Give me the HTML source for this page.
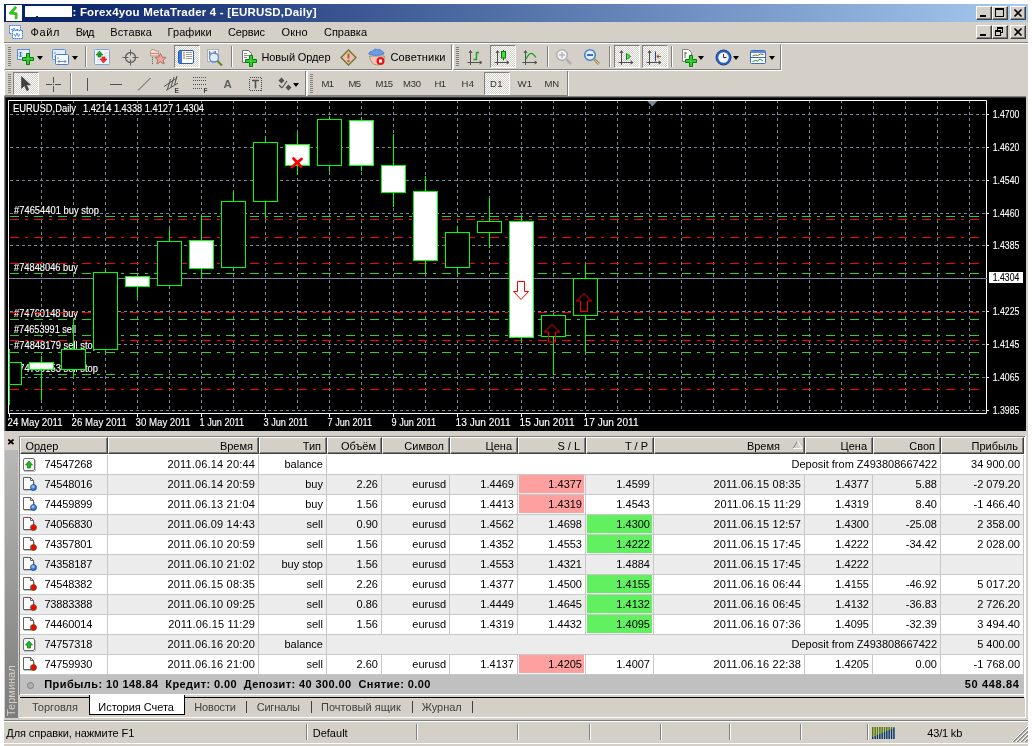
<!DOCTYPE html>
<html lang="ru"><head><meta charset="utf-8"><title>Forex4you MetaTrader 4 - [EURUSD,Daily]</title><style>
html,body{margin:0;padding:0;background:#fff}
body{width:1032px;height:746px;position:relative;overflow:hidden;will-change:transform;font-family:"Liberation Sans", sans-serif;font-size:11px;color:#000;line-height:13px}
div,span{box-sizing:border-box}
.a{position:absolute;white-space:nowrap}
.face{background:#D4D0C8}
.hdr{position:absolute;top:437px;height:17px;background:#D4D0C8;border-top:1px solid #fff;border-left:1px solid #fff;border-right:1px solid #404040;border-bottom:1px solid #404040;box-shadow:inset -1px -1px 0 #808080;text-align:right;padding:2px 5px 0 0;white-space:nowrap;line-height:13px}
.row{position:absolute;left:20px;width:1004px;height:20px;border-bottom:1px solid #C8C8C8}
.c{position:absolute;top:0;height:19px;line-height:19px;text-align:right;padding-right:3px;white-space:nowrap;border-right:1px solid #C8C8C8}
.cb{position:absolute;top:0px;height:18px}
.sep{position:absolute;width:2px;border-left:1px solid #808080;border-right:1px solid #fff}
.grip{position:absolute;width:3px;background:repeating-linear-gradient(to bottom,#808080 0,#808080 1px,transparent 1px,transparent 2px)}
.pressed{position:absolute;border:1px solid;border-color:#808080 #fff #fff #808080;background-color:#eae8e4;background-image:repeating-conic-gradient(#fff 0 25%,#D4D0C8 0 50%);background-size:2px 2px}
.tb{position:absolute;border:1px solid;border-color:#D4D0C8 #808080 #808080 #fff;background:#D4D0C8;box-shadow:1px 1px 0 #fff}
.capbtn{position:absolute;width:16px;height:14px;background:#D4D0C8;border:1px solid;border-color:#fff #404040 #404040 #fff;box-shadow:inset -1px -1px 0 #808080}
.tf{position:absolute;white-space:nowrap;color:#404040;font-size:11px}
.dd{position:absolute;width:0;height:0;border-left:3.5px solid transparent;border-right:3.5px solid transparent;border-top:4px solid #000}
</style></head><body>
<svg class="a" width="0" height="0" style="left:0;top:0"><defs><radialGradient id="gb" cx=".4" cy=".35" r=".7"><stop offset="0" stop-color="#b8d4f8"/><stop offset=".5" stop-color="#4a88e0"/><stop offset="1" stop-color="#1a50b0"/></radialGradient></defs></svg>
<div class="a face" style="left:4px;top:4px;width:1024px;height:742px"></div>
<div class="a" style="left:4px;top:4px;width:1024px;height:18px;background:linear-gradient(to right,#0A246A 0%,#0A246A 5%,#A6CAF0 100%)"></div>
<div class="a" style="left:6px;top:5px;width:16px;height:16px;background:#fff"></div>
<svg class="a" style="left:6px;top:5px" width="16" height="16" viewBox="0 0 16 16"><path d="M10 2 L4.500 8.300 L10.200 8.800 L10 14.300" fill="none" stroke="#7a8a20" stroke-width="2.600" stroke-linejoin="round"/><path d="M10 1.800 L4.300 8 L10.200 8.500 L10 14" fill="none" stroke="#22cc22" stroke-width="2.100" stroke-linejoin="round"/></svg>
<div class="a" style="left:25px;top:6px;width:47px;height:11px;background:#fff"></div>
<div class="a" style="left:36px;top:16px;width:2px;height:1px;background:#0A246A"></div>
<div class="a" style="left:72.5px;top:6px;letter-spacing:0.189px;color:#fff;font-weight:bold;font-size:11.5px">: Forex4you MetaTrader 4 - [EURUSD,Daily]</div>
<div class="capbtn" style="left:976px;top:6px"></div>
<div class="capbtn" style="left:992px;top:6px"></div>
<div class="capbtn" style="left:1010px;top:6px"></div>
<div class="a" style="left:980px;top:15px;width:6px;height:2px;background:#000"></div>
<div class="a" style="left:995px;top:8px;width:9px;height:9px;border:1px solid #000;border-top-width:2px"></div>
<svg class="a" style="left:1010px;top:6px" width="16" height="14" viewBox="0 0 16 14"><path d="M4.5 3.5 L11.5 10.5 M11.5 3.5 L4.5 10.5" stroke="#000" stroke-width="1.6" fill="none"/></svg>
<div class="capbtn" style="left:976px;top:25px"></div>
<div class="capbtn" style="left:992px;top:25px"></div>
<div class="capbtn" style="left:1010px;top:25px"></div>
<div class="a" style="left:980px;top:34px;width:6px;height:2px;background:#000"></div>
<div class="a" style="left:997px;top:27px;width:6px;height:6px;border:1px solid #000;border-top-width:2px"></div>
<div class="a" style="left:995px;top:30px;width:6px;height:6px;border:1px solid #000;border-top-width:2px;background:#D4D0C8"></div>
<svg class="a" style="left:1010px;top:25px" width="16" height="14" viewBox="0 0 16 14"><path d="M4.5 3.5 L11.5 10.5 M11.5 3.5 L4.5 10.5" stroke="#000" stroke-width="1.6" fill="none"/></svg>
<svg class="a" style="left:8px;top:24px" width="16" height="16" viewBox="0 0 16 16"><rect x="1.500" y="1.500" width="11" height="8" fill="#fff" stroke="#4080f0" stroke-dasharray="1.500 .5"/><path d="M3 5.500 h2 l1 -1.500 l1.500 3 l1 -1.500 h2" stroke="#4080f0" fill="none" stroke-width=".9"/><rect x="4.500" y="6.500" width="10" height="8" fill="#fff" stroke="#4080f0" stroke-dasharray="1.500 .5"/><path d="M6 10 l1.500 2.500 l1.500 -3.500 l1.500 3.500 l1.500 -2.500" stroke="#4080f0" fill="none" stroke-width=".9"/></svg>
<div class="a" style="left:30.4px;top:26px;letter-spacing:0.700px;">Файл</div>
<div class="a" style="left:75.8px;top:26px;letter-spacing:-0.700px;">Вид</div>
<div class="a" style="left:110.3px;top:26px;letter-spacing:0.118px;">Вставка</div>
<div class="a" style="left:167.6px;top:26px;letter-spacing:0.044px;">Графики</div>
<div class="a" style="left:228px;top:26px;letter-spacing:-0.134px;">Сервис</div>
<div class="a" style="left:281.4px;top:26px;letter-spacing:0.212px;">Окно</div>
<div class="a" style="left:324px;top:26px;letter-spacing:-0.026px;">Справка</div>
<div class="a" style="left:4px;top:42px;width:1024px;height:1px;background:#808080"></div>
<div class="a" style="left:4px;top:43px;width:1024px;height:1px;background:#fff"></div>
<div class="tb" style="left:4px;top:44px;width:448px;height:26px"></div>
<div class="tb" style="left:453px;top:44px;width:328px;height:26px"></div>
<div class="grip" style="left:8px;top:47px;height:19px"></div>
<div class="grip" style="left:456px;top:47px;height:19px"></div>
<div class="tb" style="left:4px;top:71px;width:302px;height:25px;border-top:none"></div>
<div class="tb" style="left:307px;top:71px;width:261px;height:25px;border-top:none"></div>
<div class="grip" style="left:8px;top:74px;height:19px"></div>
<div class="grip" style="left:310px;top:74px;height:19px"></div>
<div class="sep" style="left:85px;top:46px;height:21px"></div>
<div class="sep" style="left:231px;top:46px;height:21px"></div>
<div class="sep" style="left:547px;top:46px;height:21px"></div>
<div class="sep" style="left:609px;top:46px;height:21px"></div>
<div class="sep" style="left:671px;top:46px;height:21px"></div>
<div class="sep" style="left:70px;top:73px;height:21px"></div>
<div class="pressed" style="left:174px;top:45px;width:26px;height:23px"></div>
<div class="pressed" style="left:490px;top:45px;width:26px;height:23px"></div>
<div class="pressed" style="left:614px;top:45px;width:26px;height:23px"></div>
<div class="pressed" style="left:642px;top:45px;width:26px;height:23px"></div>
<div class="pressed" style="left:13px;top:72px;width:26px;height:23px"></div>
<div class="pressed" style="left:484px;top:72px;width:26px;height:23px"></div>
<div class="dd" style="left:37px;top:56px"></div>
<div class="dd" style="left:72px;top:56px"></div>
<div class="dd" style="left:698px;top:56px"></div>
<div class="dd" style="left:733px;top:56px"></div>
<div class="dd" style="left:769px;top:56px"></div>
<div class="dd" style="left:293px;top:83px"></div>
<svg class="a" style="left:16px;top:48px" width="20" height="18" viewBox="0 0 20 18"><rect x="1.5" y="1.5" width="12" height="10" fill="#e6eefc" stroke="#5b8dd9"/><path d="M4.5 4 v5 M3 5.5 l1.5 -1.500 l1.5 1.5 M3 7.5 l1.5 1.5 l1.5 -1.5" stroke="#3a6fc4" fill="none"/><path d="M6.5 9.5 h4 v-4 h3 v4 h4 v3 h-4 v4 h-3 v-4 h-4 z" fill="#2fd12f" stroke="#0a7a0a" stroke-width="1"/></svg>
<svg class="a" style="left:51px;top:48px" width="20" height="18" viewBox="0 0 20 18"><rect x="1.5" y="1.5" width="13" height="10" rx="1" fill="#e6eefc" stroke="#5b8dd9"/><path d="M4 4 v2 M4 8.500 h8 M4 8.5 l1.5 -1.5 M4 8.5 l1.5 1.5 M12 8.5 l-1.5 -1.5 M12 8.5 l-1.5 1.5" stroke="#6a8fc4" fill="none"/><rect x="4.5" y="6.500" width="13" height="10" rx="1" fill="#f4f8ff" stroke="#4a7dc9"/><path d="M7 13.5 h8 M7 13.5 l1.5 -1.5 M7 13.5 l1.5 1.5 M15 13.5 l-1.5 -1.5 M15 13.500 l-1.5 1.5 M7 9 v2" stroke="#6a8fc4" fill="none"/></svg>
<svg class="a" style="left:94px;top:49px" width="17" height="17" viewBox="0 0 17 17"><rect x="0.5" y="0.5" width="15" height="15" rx="1" fill="#f4f8ff" stroke="#7aa7e0"/><path d="M10 4h4M10 7h4M3 11h3M3 13h3" stroke="#d0d8e8"/><path d="M5.5 2 l-3.500 4 h2 v2 h3 v-2 h2 z" fill="#1ea01e" stroke="#0a700a" stroke-width=".6"/><path d="M9.5 14 l-3.500 -4 h2 v-2 h3 v2 h2 z" fill="#f03030" stroke="#c01010" stroke-width=".6"/></svg>
<svg class="a" style="left:122px;top:49px" width="17" height="17" viewBox="0 0 17 17"><circle cx="8.500" cy="8.5" r="5" fill="none" stroke="#606060" stroke-width="1.3"/><path d="M8.5 0.5 v6 M8.5 10.500 v6 M0.5 8.5 h6 M10.5 8.500 h6" stroke="#606060"/></svg>
<svg class="a" style="left:148px;top:48px" width="20" height="19" viewBox="0 0 20 19"><path d="M2.5 3.5 l1 -2 h3 l1 1.5 h3 v5 h-8z" fill="#f8d8d8" stroke="#b0a080"/><path d="M3 5.5 h7" stroke="#e08080"/><path d="M4.500 9 v8" stroke="#606060" stroke-dasharray="1 1" fill="none"/><path d="M12.5 5.5 l1.700 3.600 l3.900 .4 l-2.900 2.600 l.9 3.900 l-3.600 -2.100 l-3.600 2.100 l.9 -3.900 l-2.900 -2.600 l3.900 -.4z" fill="#f7a0a8" stroke="#a07050" stroke-width=".9"/></svg>
<svg class="a" style="left:178px;top:50px" width="17" height="15" viewBox="0 0 17 15"><rect x="0.500" y="0.5" width="15" height="13" rx="1.500" fill="#fff" stroke="#2a5db0"/><rect x="1" y="1" width="3" height="12" fill="#3a78d8"/><path d="M5.5 2.500h1M5.5 5.500h1M5.500 8.500h1" stroke="#d02020"/><path d="M5.500 4h1M5.500 7h1" stroke="#202020"/><path d="M8 2.500h6M8 4.500h6M8 6.500h6M8 8.500h6" stroke="#a0a0a0"/></svg>
<svg class="a" style="left:206px;top:49px" width="19" height="19" viewBox="0 0 19 19"><rect x="1.5" y="0.500" width="11" height="12" fill="#f4f4f4" stroke="#b0b0b0"/><path d="M3.500 2 v4 M3.500 4 h2 M9.500 2 v4 M7.500 3 h2" stroke="#6080a0"/><circle cx="8" cy="8.500" r="4.500" fill="#dce8f8" fill-opacity=".75" stroke="#5a8ad0" stroke-width="1.300"/><path d="M11.500 12 l4.500 4.500" stroke="#708030" stroke-width="2.200"/></svg>
<svg class="a" style="left:241px;top:49px" width="18" height="19" viewBox="0 0 18 19"><path d="M1.500 1.500 h6 l3 3 v9 h-9z" fill="#fff" stroke="#707070"/><path d="M3 4.500h3M3 6.500h5M3 8.500h3" stroke="#909090"/><path d="M4.5 10.5 h4 v-4 h3 v4 h4 v3 h-4 v4 h-3 v-4 h-4 z" fill="#2fd12f" stroke="#0a7a0a" stroke-width="1"/></svg>
<div class="a" style="left:261.5px;top:51px;letter-spacing:-0.109px;">Новый Ордер</div>
<svg class="a" style="left:340px;top:48.5px" width="18" height="18" viewBox="0 0 18 18"><path d="M8.500 1 L16 8.500 L8.500 16 L1 8.500z" fill="#f8b8b8" stroke="#6b7a2a" stroke-width="1.400"/><path d="M8.500 4.500 v5" stroke="#808020" stroke-width="2"/><circle cx="8.500" cy="12" r="1.200" fill="#808020"/></svg>
<svg class="a" style="left:367px;top:48px" width="20" height="20" viewBox="0 0 20 20"><path d="M2.500 8 q1 9 8 9 q6 0 7 -9z" fill="#f8c0c0" stroke="#80a040" stroke-width=".8"/><path d="M1.500 6 q1 -3 4 -3 q2 -3 5 -1.500 q3 -1 4 1.500 q3 1 2.500 3 q-8 3 -15.500 0z" fill="#6a9ae8" stroke="#4a7ac8" stroke-width=".8"/><circle cx="13.500" cy="13" r="4" fill="#e81818"/><rect x="12" y="11.500" width="3" height="3" fill="#fff"/></svg>
<div class="a" style="left:390.5px;top:51px;letter-spacing:0.156px;">Советники</div>
<svg class="a" style="left:467px;top:50px" width="17" height="17" viewBox="0 0 17 17"><path d="M3.500 1 v14 M0.500 12.500 h14 M3.500 0.500 l-1.500 2.500 M3.500 0.500 l1.500 2.500 M15 12.500 l-2.500 -1.500 M15 12.500 l-2.500 1.500" stroke="#505050" fill="none"/><path d="M9.500 2 v8 M9.500 2.500 h2.500 M6.500 9.500 h3" stroke="#1ea01e" stroke-width="1.400" fill="none"/></svg>
<svg class="a" style="left:494px;top:50px" width="17" height="17" viewBox="0 0 17 17"><path d="M3.500 1 v14 M0.500 12.500 h14 M3.500 0.500 l-1.500 2.500 M3.500 0.500 l1.500 2.500 M15 12.500 l-2.500 -1.500 M15 12.500 l-2.500 1.500" stroke="#505050" fill="none"/><path d="M9.500 -0.500 v11" stroke="#0a7a0a"/><rect x="7.500" y="1.500" width="4" height="6.500" fill="#40e040" stroke="#0a7a0a"/></svg>
<svg class="a" style="left:522px;top:50px" width="17" height="17" viewBox="0 0 17 17"><path d="M3.500 1 v14 M0.500 12.500 h14 M3.500 0.500 l-1.500 2.500 M3.500 0.500 l1.500 2.500 M15 12.500 l-2.500 -1.500 M15 12.500 l-2.500 1.500" stroke="#505050" fill="none"/><path d="M4 9 q3 -6 6 -5.500 q2 1 4 4" stroke="#1ea01e" stroke-width="1.300" fill="none"/></svg>
<svg class="a" style="left:555px;top:48px" width="19" height="19" viewBox="0 0 19 19"><circle cx="7" cy="7" r="5.300" fill="#f4f4f4" stroke="#b0b0b0" stroke-width="1.600"/><path d="M4 7h6M7 4v6" stroke="#b8b8b8" stroke-width="1.600"/><path d="M11.500 11.500 l4.500 4.500" stroke="#b0b0b0" stroke-width="2.600"/></svg>
<svg class="a" style="left:583px;top:48px" width="19" height="19" viewBox="0 0 19 19"><circle cx="7" cy="7" r="5.300" fill="#e4eefc" stroke="#4a80d0" stroke-width="1.600"/><path d="M4 7h6" stroke="#2a5db0" stroke-width="1.800"/><path d="M11.500 11.500 l4.500 4.500" stroke="#909040" stroke-width="2.600"/><path d="M12 12 l4 4" stroke="#f8c0c0" stroke-width="1"/></svg>
<svg class="a" style="left:618px;top:50px" width="17" height="17" viewBox="0 0 17 17"><path d="M3.500 1 v14 M0.500 12.500 h14 M3.500 0.500 l-1.500 2.500 M3.500 0.500 l1.500 2.500 M15 12.500 l-2.500 -1.500 M15 12.500 l-2.500 1.500" stroke="#505050" fill="none"/><path d="M8.500 3.500 l4 3 l-4 3z" fill="#60e060" stroke="#0a8a0a" stroke-width="1"/></svg>
<svg class="a" style="left:646px;top:50px" width="17" height="17" viewBox="0 0 17 17"><path d="M3.500 1 v14 M0.500 12.500 h14 M3.500 0.500 l-1.500 2.500 M3.500 0.500 l1.500 2.500 M15 12.500 l-2.500 -1.500 M15 12.500 l-2.500 1.500" stroke="#505050" fill="none"/><path d="M9.500 1.500 v10" stroke="#2040c0"/><path d="M15 6.500 h-4 M13 4.500 l-2 2 l2 2" stroke="#808020" fill="none" stroke-width="1"/><circle cx="12" cy="6.500" r="1" fill="#e02020"/></svg>
<svg class="a" style="left:680px;top:48px" width="19" height="19" viewBox="0 0 19 19"><path d="M2.500 1.500 h6 l3 3 v9 h-9z" fill="#fff" stroke="#808080"/><path d="M5 4 v6 M5 5h2" stroke="#606060" fill="none"/><path d="M5.5 11.5 h4 v-4 h3 v4 h4 v3 h-4 v4 h-3 v-4 h-4 z" fill="#2fd12f" stroke="#0a7a0a" stroke-width="1"/></svg>
<svg class="a" style="left:714.5px;top:48.5px" width="18" height="18" viewBox="0 0 18 18"><circle cx="8.500" cy="8.500" r="7.500" fill="#2a60c8" stroke="#1a3a90"/><circle cx="8.500" cy="8.500" r="5.200" fill="#f4f8ff"/><path d="M8.500 5 v3.500 h3" stroke="#303030" fill="none"/></svg>
<svg class="a" style="left:750px;top:50px" width="17" height="15" viewBox="0 0 17 15"><rect x="0.500" y="0.500" width="15" height="13" rx="1" fill="#fff" stroke="#3a6fc4"/><rect x="1" y="1" width="14" height="2" fill="#5a8ad8"/><path d="M1 7.500 h14" stroke="#3a6fc4"/><path d="M2.500 6 l3 -1 l2 .5 l3 -1.500 l3 .5" stroke="#707010" fill="none"/><path d="M2.500 11.500 l3 -1 l2 .5 l2.500 -2 l3 2" stroke="#1e901e" fill="none"/></svg>
<svg class="a" style="left:20px;top:76px" width="12" height="16" viewBox="0 0 12 16"><path d="M1.500 0.500 v12 l3 -2.800 l2.300 5 l2 -1 l-2.300 -4.800 h4z" fill="#404040" stroke="#404040" stroke-width=".6"/></svg>
<svg class="a" style="left:46px;top:77px" width="16" height="16" viewBox="0 0 16 16"><path d="M7.500 0 v6 M7.500 9 v6 M0 7.500 h6 M9 7.500 h6 M7 7.500 h1" stroke="#505050" fill="none"/></svg>
<div class="a" style="left:87px;top:78px;width:1px;height:13px;background:#505050"></div>
<div class="a" style="left:110px;top:84px;width:12px;height:1px;background:#505050"></div>
<svg class="a" style="left:137px;top:77px" width="15" height="15" viewBox="0 0 15 15"><path d="M1 13.500 L13.500 1" stroke="#505050" fill="none"/></svg>
<svg class="a" style="left:163px;top:75px" width="20" height="20" viewBox="0 0 20 20"><path d="M1 11.500 L14 3 M3 15.500 L15 8 M4.500 14 l3 -10 M8 12 l3 -10 M11.500 10 l2.500 -9" stroke="#505050" fill="none"/><text x="11.500" y="17.600" font-size="6.500" font-weight="bold" fill="#404040" font-family="Liberation Sans, sans-serif">E</text></svg>
<svg class="a" style="left:192px;top:76px" width="20" height="20" viewBox="0 0 20 20"><path d="M1 1.500 h13 M1 4.500 h13 M1 8.500 h13 M1 12.500 h10" stroke="#505050" stroke-dasharray="1 1" fill="none"/><text x="11.500" y="16.600" font-size="6.500" font-weight="bold" fill="#404040" font-family="Liberation Sans, sans-serif">F</text></svg>
<div class="a" style="left:223.5px;top:78px;font-size:11.500px;font-weight:bold;color:#606060">A</div>
<svg class="a" style="left:249px;top:77px" width="14" height="15" viewBox="0 0 14 15"><rect x="0.500" y="0.500" width="12" height="13" fill="none" stroke="#404040" stroke-dasharray="1 1" shape-rendering="crispEdges"/><path d="M3 3.500 h7 M6.500 3.500 v8" stroke="#505050" stroke-width="1.600" fill="none"/></svg>
<svg class="a" style="left:277px;top:77px" width="16" height="15" viewBox="0 0 16 15"><path d="M4.500 0.500 l3 3 l-3 3 l-3 -3z M11.500 7.500 l3 3 l-3 3 l-3 -3z" fill="#505050"/><path d="M2 8 l3 3 M5 11 l5 -7" stroke="#505050" fill="none" stroke-width="1.200"/></svg>
<div class="a" style="left:321.5px;top:77.2px;letter-spacing:-0.700px;color:#303030;font-size:9.500px">M1</div>
<div class="a" style="left:348.5px;top:77.2px;letter-spacing:-0.700px;color:#303030;font-size:9.500px">M5</div>
<div class="a" style="left:375.5px;top:77.2px;letter-spacing:-0.492px;color:#303030;font-size:9.500px">M15</div>
<div class="a" style="left:403px;top:77.2px;letter-spacing:-0.242px;color:#303030;font-size:9.500px">M30</div>
<div class="a" style="left:434.5px;top:77.2px;letter-spacing:-0.656px;color:#303030;font-size:9.500px">H1</div>
<div class="a" style="left:461.5px;top:77.2px;letter-spacing:0.344px;color:#303030;font-size:9.500px">H4</div>
<div class="a" style="left:490px;top:77.2px;letter-spacing:0.344px;color:#303030;font-size:9.500px">D1</div>
<div class="a" style="left:517.5px;top:77.2px;letter-spacing:0.250px;color:#303030;font-size:9.500px">W1</div>
<div class="a" style="left:544.5px;top:77.2px;letter-spacing:-0.281px;color:#303030;font-size:9.500px">MN</div>
<svg class="a" style="left:0;top:0" width="1032" height="746" viewBox="0 0 1032 746"><rect x="4" y="97" width="1022" height="334" fill="#000"/><rect x="4" y="96" width="1022" height="1" fill="#808080"/><rect x="4" y="97" width="1022" height="1" fill="#303030"/><rect x="4" y="97" width="1" height="334" fill="#808080"/><rect x="5" y="98" width="1" height="333" fill="#303030"/><g stroke="#778899" stroke-width="1" stroke-dasharray="3 3" fill="none"><path d="M10 114.5 H986"/><path d="M10 147.5 H986"/><path d="M10 180.5 H986"/><path d="M10 213.5 H986"/><path d="M10 245.5 H986"/><path d="M10 311.5 H986"/><path d="M10 344.5 H986"/><path d="M10 377.5 H986"/><path d="M10 410.5 H986"/><path d="M41.5 100 V412"/><path d="M73.5 100 V412"/><path d="M105.5 100 V412"/><path d="M137.5 100 V412"/><path d="M169.5 100 V412"/><path d="M201.5 100 V412"/><path d="M233.5 100 V412"/><path d="M265.5 100 V412"/><path d="M297.5 100 V412"/><path d="M329.5 100 V412"/><path d="M361.5 100 V412"/><path d="M393.5 100 V412"/><path d="M425.5 100 V412"/><path d="M457.5 100 V412"/><path d="M489.5 100 V412"/><path d="M521.5 100 V412"/><path d="M553.5 100 V412"/><path d="M585.5 100 V412"/><path d="M617.5 100 V412"/><path d="M649.5 100 V412"/><path d="M681.5 100 V412"/><path d="M713.5 100 V412"/><path d="M745.5 100 V412"/><path d="M777.5 100 V412"/><path d="M809.5 100 V412"/><path d="M841.5 100 V412"/><path d="M873.5 100 V412"/><path d="M905.5 100 V412"/><path d="M937.5 100 V412"/><path d="M969.5 100 V412"/></g><path d="M8.5 413.5 V100.5 H986.5 V413.5 M8.5 413.5 H986.5" stroke="#fff" fill="none"/><path d="M987 114.5 h2" stroke="#fff"/><path d="M987 147.5 h2" stroke="#fff"/><path d="M987 180.5 h2" stroke="#fff"/><path d="M987 213.5 h2" stroke="#fff"/><path d="M987 245.5 h2" stroke="#fff"/><path d="M987 311.5 h2" stroke="#fff"/><path d="M987 344.5 h2" stroke="#fff"/><path d="M987 377.5 h2" stroke="#fff"/><path d="M987 410.5 h2" stroke="#fff"/><path d="M9.5 414 v3" stroke="#fff"/><path d="M73.5 414 v3" stroke="#fff"/><path d="M137.5 414 v3" stroke="#fff"/><path d="M201.5 414 v3" stroke="#fff"/><path d="M265.5 414 v3" stroke="#fff"/><path d="M329.5 414 v3" stroke="#fff"/><path d="M393.5 414 v3" stroke="#fff"/><path d="M457.5 414 v3" stroke="#fff"/><path d="M521.5 414 v3" stroke="#fff"/><path d="M585.5 414 v3" stroke="#fff"/><path d="M647.300 101 h10 l-5 5.500z" fill="#778899"/><rect x="12" y="103" width="65" height="11" fill="#000"/><text x="13" y="111.5" fill="#fff" stroke="#fff" text-anchor="start" font-family="Liberation Sans, sans-serif" font-size="10" stroke-width="0.12" textLength="63" lengthAdjust="spacingAndGlyphs">EURUSD,Daily</text><rect x="82" y="103" width="123" height="11" fill="#000"/><text x="83" y="111.5" fill="#fff" stroke="#fff" text-anchor="start" font-family="Liberation Sans, sans-serif" font-size="10" stroke-width="0.12" textLength="121" lengthAdjust="spacingAndGlyphs">1.4214 1.4338 1.4127 1.4304</text><rect x="13" y="206" width="87" height="11" fill="#000"/><text x="14" y="214" fill="#fff" stroke="#fff" text-anchor="start" font-family="Liberation Sans, sans-serif" font-size="10" stroke-width="0.12" textLength="85" lengthAdjust="spacingAndGlyphs">#74654401 buy stop</text><rect x="13" y="263" width="66" height="11" fill="#000"/><text x="14" y="271" fill="#fff" stroke="#fff" text-anchor="start" font-family="Liberation Sans, sans-serif" font-size="10" stroke-width="0.12" textLength="64" lengthAdjust="spacingAndGlyphs">#74848046 buy</text><rect x="13" y="309" width="66" height="11" fill="#000"/><text x="14" y="317" fill="#fff" stroke="#fff" text-anchor="start" font-family="Liberation Sans, sans-serif" font-size="10" stroke-width="0.12" textLength="64" lengthAdjust="spacingAndGlyphs">#74760148 buy</text><rect x="13" y="325" width="64" height="11" fill="#000"/><text x="14" y="333" fill="#fff" stroke="#fff" text-anchor="start" font-family="Liberation Sans, sans-serif" font-size="10" stroke-width="0.12" textLength="62" lengthAdjust="spacingAndGlyphs">#74653991 sell</text><rect x="13" y="341" width="86" height="11" fill="#000"/><text x="14" y="349" fill="#fff" stroke="#fff" text-anchor="start" font-family="Liberation Sans, sans-serif" font-size="10" stroke-width="0.12" textLength="84" lengthAdjust="spacingAndGlyphs">#74848179 sell stop</text><rect x="13" y="363" width="86" height="11" fill="#000"/><text x="14" y="371.5" fill="#fff" stroke="#fff" text-anchor="start" font-family="Liberation Sans, sans-serif" font-size="10" stroke-width="0.12" textLength="84" lengthAdjust="spacingAndGlyphs">#74769153 sell stop</text><g stroke-width="1" stroke-dasharray="9 6 3 6" fill="none"><path d="M10 216.5 H979" stroke="#32CD32"/><path d="M10 219.5 H979" stroke="#FF0000"/><path d="M10 237.5 H979" stroke="#FF0000"/><path d="M10 263.5 H979" stroke="#FF0000"/><path d="M10 273.5 H979" stroke="#32CD32"/><path d="M10 312.5 H979" stroke="#FF0000"/><path d="M10 319.5 H979" stroke="#32CD32"/><path d="M10 335.5 H979" stroke="#32CD32"/><path d="M10 340.5 H979" stroke="#FF0000"/><path d="M10 352.5 H979" stroke="#32CD32"/><path d="M10 374.5 H979" stroke="#32CD32"/><path d="M10 389.5 H979" stroke="#FF0000"/></g><path d="M9 278.5 H987" stroke="#778899"/><g shape-rendering="crispEdges"><path d="M9.5 349 V405" stroke="#00FF00"/><rect x="9.5" y="362.5" width="12" height="22" fill="#000" stroke="#00FF00"/><path d="M41.5 356 V400" stroke="#00FF00"/><rect x="29.5" y="362.5" width="24" height="7" fill="#fff" stroke="#00FF00"/><path d="M73.5 319 V377" stroke="#00FF00"/><rect x="61.5" y="349.5" width="24" height="20" fill="#000" stroke="#00FF00"/><path d="M105.5 269 V353" stroke="#00FF00"/><rect x="93.5" y="272.5" width="24" height="77" fill="#000" stroke="#00FF00"/><path d="M137.5 276 V299" stroke="#00FF00"/><rect x="125.5" y="276.5" width="24" height="10" fill="#fff" stroke="#00FF00"/><path d="M169.5 229 V287" stroke="#00FF00"/><rect x="157.5" y="241.5" width="24" height="44" fill="#000" stroke="#00FF00"/><path d="M201.5 215 V278" stroke="#00FF00"/><rect x="189.5" y="240.5" width="24" height="28" fill="#fff" stroke="#00FF00"/><path d="M233.5 191 V271" stroke="#00FF00"/><rect x="221.5" y="201.5" width="24" height="66" fill="#000" stroke="#00FF00"/><path d="M265.5 137 V219" stroke="#00FF00"/><rect x="253.5" y="142.5" width="24" height="59" fill="#000" stroke="#00FF00"/><path d="M297.5 132 V175" stroke="#00FF00"/><rect x="285.5" y="144.5" width="24" height="21" fill="#fff" stroke="#00FF00"/><path d="M329.5 116 V172" stroke="#00FF00"/><rect x="317.5" y="119.5" width="24" height="46" fill="#000" stroke="#00FF00"/><path d="M361.5 117 V171" stroke="#00FF00"/><rect x="349.5" y="120.5" width="24" height="45" fill="#fff" stroke="#00FF00"/><path d="M393.5 134 V207" stroke="#00FF00"/><rect x="381.5" y="165.5" width="24" height="27" fill="#fff" stroke="#00FF00"/><path d="M425.5 176 V273" stroke="#00FF00"/><rect x="413.5" y="191.5" width="24" height="69" fill="#fff" stroke="#00FF00"/><path d="M457.5 226 V274" stroke="#00FF00"/><rect x="445.5" y="232.5" width="24" height="35" fill="#000" stroke="#00FF00"/><path d="M489.5 198 V248" stroke="#00FF00"/><rect x="477.5" y="221.5" width="24" height="11" fill="#000" stroke="#00FF00"/><path d="M521.5 216 V342" stroke="#00FF00"/><rect x="509.5" y="221.5" width="24" height="116" fill="#fff" stroke="#00FF00"/><path d="M553.5 313 V375" stroke="#00FF00"/><rect x="541.5" y="315.5" width="24" height="21" fill="#000" stroke="#00FF00"/><path d="M585.5 264 V353" stroke="#00FF00"/><rect x="573.5" y="278.5" width="24" height="37" fill="#000" stroke="#00FF00"/></g><path d="M8.5 413.5 V100.5" stroke="#fff" fill="none"/><path d="M293.5 158.5 L301 166.5 M301.5 159 L292 167" stroke="#FF0000" stroke-width="2.8" fill="none" stroke-linecap="round"/><path d="M517.5 281.5 h7 v10 h4 l-7.5 8 l-7.5 -8 h4z" fill="none" stroke="#FF0000"/><path d="M552 324.5 l7.5 7.5 h-4 v10 h-7 v-10 h-4z" fill="none" stroke="#FF0000"/><path d="M584 293.5 l7.5 7.5 h-4 v10.5 h-7 v-10.5 h-4z" fill="none" stroke="#FF0000"/><text x="992.8" y="117.5" fill="#fff" stroke="#fff" text-anchor="start" font-family="Liberation Sans, sans-serif" font-size="10" stroke-width="0.12" textLength="26.5" lengthAdjust="spacingAndGlyphs">1.4700</text><text x="992.8" y="150.5" fill="#fff" stroke="#fff" text-anchor="start" font-family="Liberation Sans, sans-serif" font-size="10" stroke-width="0.12" textLength="26.5" lengthAdjust="spacingAndGlyphs">1.4620</text><text x="992.8" y="183.5" fill="#fff" stroke="#fff" text-anchor="start" font-family="Liberation Sans, sans-serif" font-size="10" stroke-width="0.12" textLength="26.5" lengthAdjust="spacingAndGlyphs">1.4540</text><text x="992.8" y="216.5" fill="#fff" stroke="#fff" text-anchor="start" font-family="Liberation Sans, sans-serif" font-size="10" stroke-width="0.12" textLength="26.5" lengthAdjust="spacingAndGlyphs">1.4460</text><text x="992.8" y="248.5" fill="#fff" stroke="#fff" text-anchor="start" font-family="Liberation Sans, sans-serif" font-size="10" stroke-width="0.12" textLength="26.5" lengthAdjust="spacingAndGlyphs">1.4385</text><text x="992.8" y="314.5" fill="#fff" stroke="#fff" text-anchor="start" font-family="Liberation Sans, sans-serif" font-size="10" stroke-width="0.12" textLength="26.5" lengthAdjust="spacingAndGlyphs">1.4225</text><text x="992.8" y="347.5" fill="#fff" stroke="#fff" text-anchor="start" font-family="Liberation Sans, sans-serif" font-size="10" stroke-width="0.12" textLength="26.5" lengthAdjust="spacingAndGlyphs">1.4145</text><text x="992.8" y="380.5" fill="#fff" stroke="#fff" text-anchor="start" font-family="Liberation Sans, sans-serif" font-size="10" stroke-width="0.12" textLength="26.5" lengthAdjust="spacingAndGlyphs">1.4065</text><text x="992.8" y="413.5" fill="#fff" stroke="#fff" text-anchor="start" font-family="Liberation Sans, sans-serif" font-size="10" stroke-width="0.12" textLength="26.5" lengthAdjust="spacingAndGlyphs">1.3985</text><rect x="989" y="272" width="34" height="11" fill="#fff"/><text x="992.8" y="281" fill="#000" stroke="#000" text-anchor="start" font-family="Liberation Sans, sans-serif" font-size="10" stroke-width="0.12" textLength="26.5" lengthAdjust="spacingAndGlyphs">1.4304</text><text x="7.6" y="426" fill="#fff" stroke="#fff" text-anchor="start" font-family="Liberation Sans, sans-serif" font-size="10" stroke-width="0.12" textLength="55" lengthAdjust="spacingAndGlyphs">24 May 2011</text><text x="71.6" y="426" fill="#fff" stroke="#fff" text-anchor="start" font-family="Liberation Sans, sans-serif" font-size="10" stroke-width="0.12" textLength="55" lengthAdjust="spacingAndGlyphs">26 May 2011</text><text x="135.6" y="426" fill="#fff" stroke="#fff" text-anchor="start" font-family="Liberation Sans, sans-serif" font-size="10" stroke-width="0.12" textLength="55" lengthAdjust="spacingAndGlyphs">30 May 2011</text><text x="199.6" y="426" fill="#fff" stroke="#fff" text-anchor="start" font-family="Liberation Sans, sans-serif" font-size="10" stroke-width="0.12" textLength="44.5" lengthAdjust="spacingAndGlyphs">1 Jun 2011</text><text x="263.6" y="426" fill="#fff" stroke="#fff" text-anchor="start" font-family="Liberation Sans, sans-serif" font-size="10" stroke-width="0.12" textLength="44.5" lengthAdjust="spacingAndGlyphs">3 Jun 2011</text><text x="327.6" y="426" fill="#fff" stroke="#fff" text-anchor="start" font-family="Liberation Sans, sans-serif" font-size="10" stroke-width="0.12" textLength="44.5" lengthAdjust="spacingAndGlyphs">7 Jun 2011</text><text x="391.6" y="426" fill="#fff" stroke="#fff" text-anchor="start" font-family="Liberation Sans, sans-serif" font-size="10" stroke-width="0.12" textLength="44.5" lengthAdjust="spacingAndGlyphs">9 Jun 2011</text><text x="455.6" y="426" fill="#fff" stroke="#fff" text-anchor="start" font-family="Liberation Sans, sans-serif" font-size="10" stroke-width="0.12" textLength="55" lengthAdjust="spacingAndGlyphs">13 Jun 2011</text><text x="519.6" y="426" fill="#fff" stroke="#fff" text-anchor="start" font-family="Liberation Sans, sans-serif" font-size="10" stroke-width="0.12" textLength="55" lengthAdjust="spacingAndGlyphs">15 Jun 2011</text><text x="583.6" y="426" fill="#fff" stroke="#fff" text-anchor="start" font-family="Liberation Sans, sans-serif" font-size="10" stroke-width="0.12" textLength="55" lengthAdjust="spacingAndGlyphs">17 Jun 2011</text></svg>
<div class="a" style="left:5px;top:450px;width:13px;height:268px;background:linear-gradient(to bottom,#B8B8B8,#7C7C7C)"></div>
<svg class="a" style="left:7px;top:438px" width="8" height="8" viewBox="0 0 8 8"><path d="M1.300 1.500 L6.500 6.200 M6.500 1.500 L1.300 6.200" stroke="#000" stroke-width="1.700"/></svg>
<div class="a" style="left:5px;top:716px;width:13px;height:50px;transform-origin:0 0;transform:rotate(-90deg) ;color:#D4D0C8;font-size:11px;line-height:13px;width:60px;height:13px">Терминал</div>
<div class="a" style="left:19px;top:436px;width:1007px;height:262px;background:#fff;border-left:1px solid #808080;border-top:1px solid #808080"></div>
<div class="hdr" style="left:20px;width:88px;text-align:left;padding-left:4.4px;">Ордер</div>
<div class="hdr" style="left:108px;width:151px;">Время</div>
<div class="hdr" style="left:259px;width:68px;">Тип</div>
<div class="hdr" style="left:327px;width:55px;">Объём</div>
<div class="hdr" style="left:382px;width:68px;">Символ</div>
<div class="hdr" style="left:450px;width:68px;">Цена</div>
<div class="hdr" style="left:518px;width:68px;">S / L</div>
<div class="hdr" style="left:586px;width:68px;">T / P</div>
<div class="hdr" style="left:654px;width:151px;padding-right:24px;">Время</div>
<div class="hdr" style="left:805px;width:68px;">Цена</div>
<div class="hdr" style="left:873px;width:68px;">Своп</div>
<div class="hdr" style="left:941px;width:83px;">Прибыль</div>
<svg class="a" style="left:792px;top:440px" width="12" height="10" viewBox="0 0 12 10"><path d="M1 8.5 L5.5 1 " stroke="#808080" fill="none"/><path d="M5.5 1 L10 8.5 H1" stroke="#fff" fill="none"/></svg>
<div class="row" style="top:455px;background:#fff">
<svg class="a" style="left:3px;top:3px" width="13" height="14" viewBox="0 0 13 14"><rect x="0.5" y="0.5" width="11" height="12" rx="1.5" fill="#fafafa" stroke="#707070"/><path d="M1 13.5 h11 M12.5 2 v11" stroke="#c0c0c0" fill="none"/><path d="M6 3 l-3.500 4 h2 v3 h3 v-3 h2z" fill="#1fb81f" stroke="#0a7a0a" stroke-width=".7"/></svg>
<div class="c" style="left:0;width:88px;text-align:left;padding-left:24.4px;letter-spacing:-0.15px">74547268</div>
<div class="c" style="left:88px;width:151px;letter-spacing:0.17px;">2011.06.14 20:44</div>
<div class="c" style="left:239px;width:68px;">balance</div>
<div class="c" style="left:307px;width:614px;">Deposit from Z493808667422</div>
<div class="c" style="left:921px;width:83px;">34 900.00</div>
</div>
<div class="row" style="top:475px;background:#ECECEC">
<svg class="a" style="left:3px;top:2px" width="15" height="15" viewBox="0 0 15 15"><path d="M0.5 0.5 h7 l3 3 v9 h-10z" fill="#fff" stroke="#606060"/><path d="M7.5 0.5 v3 h3" fill="none" stroke="#606060"/><path d="M1 13.5 h10 M11.500 5 v8" stroke="#c0c0c0" fill="none"/><circle cx="10.500" cy="10.500" r="3" fill="url(#gb)" stroke="#1a4aa0" stroke-width=".8"/></svg>
<div class="c" style="left:0;width:88px;text-align:left;padding-left:24.4px;letter-spacing:-0.15px">74548016</div>
<div class="c" style="left:88px;width:151px;letter-spacing:0.17px;">2011.06.14 20:59</div>
<div class="c" style="left:239px;width:68px;">buy</div>
<div class="c" style="left:307px;width:55px;">2.26</div>
<div class="c" style="left:362px;width:68px;">eurusd</div>
<div class="c" style="left:430px;width:68px;">1.4469</div>
<div class="c" style="left:498px;width:68px;background:#FFA0A0;box-shadow:inset 0 -1px 0 #ECECEC, inset -1px 0 0 #ECECEC, inset 1px 0 0 #ECECEC;">1.4377</div>
<div class="c" style="left:566px;width:68px;">1.4599</div>
<div class="c" style="left:634px;width:151px;letter-spacing:0.17px;">2011.06.15 08:35</div>
<div class="c" style="left:785px;width:68px;">1.4377</div>
<div class="c" style="left:853px;width:68px;">5.88</div>
<div class="c" style="left:921px;width:83px;">-2 079.20</div>
</div>
<div class="row" style="top:495px;background:#fff">
<svg class="a" style="left:3px;top:2px" width="15" height="15" viewBox="0 0 15 15"><path d="M0.5 0.5 h7 l3 3 v9 h-10z" fill="#fff" stroke="#606060"/><path d="M7.5 0.5 v3 h3" fill="none" stroke="#606060"/><path d="M1 13.5 h10 M11.500 5 v8" stroke="#c0c0c0" fill="none"/><circle cx="10.500" cy="10.500" r="3" fill="url(#gb)" stroke="#1a4aa0" stroke-width=".8"/></svg>
<div class="c" style="left:0;width:88px;text-align:left;padding-left:24.4px;letter-spacing:-0.15px">74459899</div>
<div class="c" style="left:88px;width:151px;letter-spacing:0.17px;">2011.06.13 21:04</div>
<div class="c" style="left:239px;width:68px;">buy</div>
<div class="c" style="left:307px;width:55px;">1.56</div>
<div class="c" style="left:362px;width:68px;">eurusd</div>
<div class="c" style="left:430px;width:68px;">1.4413</div>
<div class="c" style="left:498px;width:68px;background:#FFA0A0;box-shadow:inset 0 -1px 0 #fff, inset -1px 0 0 #fff, inset 1px 0 0 #fff;">1.4319</div>
<div class="c" style="left:566px;width:68px;">1.4543</div>
<div class="c" style="left:634px;width:151px;letter-spacing:0.17px;">2011.06.15 11:29</div>
<div class="c" style="left:785px;width:68px;">1.4319</div>
<div class="c" style="left:853px;width:68px;">8.40</div>
<div class="c" style="left:921px;width:83px;">-1 466.40</div>
</div>
<div class="row" style="top:515px;background:#ECECEC">
<svg class="a" style="left:3px;top:2px" width="15" height="15" viewBox="0 0 15 15"><path d="M0.5 0.5 h7 l3 3 v9 h-10z" fill="#fff" stroke="#606060"/><path d="M7.5 0.5 v3 h3" fill="none" stroke="#606060"/><path d="M1 13.5 h10 M11.500 5 v8" stroke="#c0c0c0" fill="none"/><circle cx="10.500" cy="10.500" r="3" fill="#ff0000" stroke="#506020" stroke-width=".8"/></svg>
<div class="c" style="left:0;width:88px;text-align:left;padding-left:24.4px;letter-spacing:-0.15px">74056830</div>
<div class="c" style="left:88px;width:151px;letter-spacing:0.17px;">2011.06.09 14:43</div>
<div class="c" style="left:239px;width:68px;">sell</div>
<div class="c" style="left:307px;width:55px;">0.90</div>
<div class="c" style="left:362px;width:68px;">eurusd</div>
<div class="c" style="left:430px;width:68px;">1.4562</div>
<div class="c" style="left:498px;width:68px;">1.4698</div>
<div class="c" style="left:566px;width:68px;background:#60F060;box-shadow:inset 0 -1px 0 #ECECEC, inset -1px 0 0 #ECECEC, inset 1px 0 0 #ECECEC;">1.4300</div>
<div class="c" style="left:634px;width:151px;letter-spacing:0.17px;">2011.06.15 12:57</div>
<div class="c" style="left:785px;width:68px;">1.4300</div>
<div class="c" style="left:853px;width:68px;">-25.08</div>
<div class="c" style="left:921px;width:83px;">2 358.00</div>
</div>
<div class="row" style="top:535px;background:#fff">
<svg class="a" style="left:3px;top:2px" width="15" height="15" viewBox="0 0 15 15"><path d="M0.5 0.5 h7 l3 3 v9 h-10z" fill="#fff" stroke="#606060"/><path d="M7.5 0.5 v3 h3" fill="none" stroke="#606060"/><path d="M1 13.5 h10 M11.500 5 v8" stroke="#c0c0c0" fill="none"/><circle cx="10.500" cy="10.500" r="3" fill="#ff0000" stroke="#506020" stroke-width=".8"/></svg>
<div class="c" style="left:0;width:88px;text-align:left;padding-left:24.4px;letter-spacing:-0.15px">74357801</div>
<div class="c" style="left:88px;width:151px;letter-spacing:0.17px;">2011.06.10 20:59</div>
<div class="c" style="left:239px;width:68px;">sell</div>
<div class="c" style="left:307px;width:55px;">1.56</div>
<div class="c" style="left:362px;width:68px;">eurusd</div>
<div class="c" style="left:430px;width:68px;">1.4352</div>
<div class="c" style="left:498px;width:68px;">1.4553</div>
<div class="c" style="left:566px;width:68px;background:#60F060;box-shadow:inset 0 -1px 0 #fff, inset -1px 0 0 #fff, inset 1px 0 0 #fff;">1.4222</div>
<div class="c" style="left:634px;width:151px;letter-spacing:0.17px;">2011.06.15 17:45</div>
<div class="c" style="left:785px;width:68px;">1.4222</div>
<div class="c" style="left:853px;width:68px;">-34.42</div>
<div class="c" style="left:921px;width:83px;">2 028.00</div>
</div>
<div class="row" style="top:555px;background:#ECECEC">
<svg class="a" style="left:3px;top:2px" width="15" height="15" viewBox="0 0 15 15"><path d="M0.5 0.5 h7 l3 3 v9 h-10z" fill="#fff" stroke="#606060"/><path d="M7.5 0.5 v3 h3" fill="none" stroke="#606060"/><path d="M1 13.5 h10 M11.500 5 v8" stroke="#c0c0c0" fill="none"/><circle cx="10.500" cy="10.500" r="3" fill="url(#gb)" stroke="#1a4aa0" stroke-width=".8"/></svg>
<div class="c" style="left:0;width:88px;text-align:left;padding-left:24.4px;letter-spacing:-0.15px">74358187</div>
<div class="c" style="left:88px;width:151px;letter-spacing:0.17px;">2011.06.10 21:02</div>
<div class="c" style="left:239px;width:68px;">buy stop</div>
<div class="c" style="left:307px;width:55px;">1.56</div>
<div class="c" style="left:362px;width:68px;">eurusd</div>
<div class="c" style="left:430px;width:68px;">1.4553</div>
<div class="c" style="left:498px;width:68px;">1.4321</div>
<div class="c" style="left:566px;width:68px;">1.4884</div>
<div class="c" style="left:634px;width:151px;letter-spacing:0.17px;">2011.06.15 17:45</div>
<div class="c" style="left:785px;width:68px;">1.4222</div>
<div class="c" style="left:853px;width:68px;"></div>
<div class="c" style="left:921px;width:83px;"></div>
</div>
<div class="row" style="top:575px;background:#fff">
<svg class="a" style="left:3px;top:2px" width="15" height="15" viewBox="0 0 15 15"><path d="M0.5 0.5 h7 l3 3 v9 h-10z" fill="#fff" stroke="#606060"/><path d="M7.5 0.5 v3 h3" fill="none" stroke="#606060"/><path d="M1 13.5 h10 M11.500 5 v8" stroke="#c0c0c0" fill="none"/><circle cx="10.500" cy="10.500" r="3" fill="#ff0000" stroke="#506020" stroke-width=".8"/></svg>
<div class="c" style="left:0;width:88px;text-align:left;padding-left:24.4px;letter-spacing:-0.15px">74548382</div>
<div class="c" style="left:88px;width:151px;letter-spacing:0.17px;">2011.06.15 08:35</div>
<div class="c" style="left:239px;width:68px;">sell</div>
<div class="c" style="left:307px;width:55px;">2.26</div>
<div class="c" style="left:362px;width:68px;">eurusd</div>
<div class="c" style="left:430px;width:68px;">1.4377</div>
<div class="c" style="left:498px;width:68px;">1.4500</div>
<div class="c" style="left:566px;width:68px;background:#60F060;box-shadow:inset 0 -1px 0 #fff, inset -1px 0 0 #fff, inset 1px 0 0 #fff;">1.4155</div>
<div class="c" style="left:634px;width:151px;letter-spacing:0.17px;">2011.06.16 06:44</div>
<div class="c" style="left:785px;width:68px;">1.4155</div>
<div class="c" style="left:853px;width:68px;">-46.92</div>
<div class="c" style="left:921px;width:83px;">5 017.20</div>
</div>
<div class="row" style="top:595px;background:#ECECEC">
<svg class="a" style="left:3px;top:2px" width="15" height="15" viewBox="0 0 15 15"><path d="M0.5 0.5 h7 l3 3 v9 h-10z" fill="#fff" stroke="#606060"/><path d="M7.5 0.5 v3 h3" fill="none" stroke="#606060"/><path d="M1 13.5 h10 M11.500 5 v8" stroke="#c0c0c0" fill="none"/><circle cx="10.500" cy="10.500" r="3" fill="#ff0000" stroke="#506020" stroke-width=".8"/></svg>
<div class="c" style="left:0;width:88px;text-align:left;padding-left:24.4px;letter-spacing:-0.15px">73883388</div>
<div class="c" style="left:88px;width:151px;letter-spacing:0.17px;">2011.06.10 09:25</div>
<div class="c" style="left:239px;width:68px;">sell</div>
<div class="c" style="left:307px;width:55px;">0.86</div>
<div class="c" style="left:362px;width:68px;">eurusd</div>
<div class="c" style="left:430px;width:68px;">1.4449</div>
<div class="c" style="left:498px;width:68px;">1.4645</div>
<div class="c" style="left:566px;width:68px;background:#60F060;box-shadow:inset 0 -1px 0 #ECECEC, inset -1px 0 0 #ECECEC, inset 1px 0 0 #ECECEC;">1.4132</div>
<div class="c" style="left:634px;width:151px;letter-spacing:0.17px;">2011.06.16 06:45</div>
<div class="c" style="left:785px;width:68px;">1.4132</div>
<div class="c" style="left:853px;width:68px;">-36.83</div>
<div class="c" style="left:921px;width:83px;">2 726.20</div>
</div>
<div class="row" style="top:615px;background:#fff">
<svg class="a" style="left:3px;top:2px" width="15" height="15" viewBox="0 0 15 15"><path d="M0.5 0.5 h7 l3 3 v9 h-10z" fill="#fff" stroke="#606060"/><path d="M7.5 0.5 v3 h3" fill="none" stroke="#606060"/><path d="M1 13.5 h10 M11.500 5 v8" stroke="#c0c0c0" fill="none"/><circle cx="10.500" cy="10.500" r="3" fill="#ff0000" stroke="#506020" stroke-width=".8"/></svg>
<div class="c" style="left:0;width:88px;text-align:left;padding-left:24.4px;letter-spacing:-0.15px">74460014</div>
<div class="c" style="left:88px;width:151px;letter-spacing:0.17px;">2011.06.15 11:29</div>
<div class="c" style="left:239px;width:68px;">sell</div>
<div class="c" style="left:307px;width:55px;">1.56</div>
<div class="c" style="left:362px;width:68px;">eurusd</div>
<div class="c" style="left:430px;width:68px;">1.4319</div>
<div class="c" style="left:498px;width:68px;">1.4432</div>
<div class="c" style="left:566px;width:68px;background:#60F060;box-shadow:inset 0 -1px 0 #fff, inset -1px 0 0 #fff, inset 1px 0 0 #fff;">1.4095</div>
<div class="c" style="left:634px;width:151px;letter-spacing:0.17px;">2011.06.16 07:36</div>
<div class="c" style="left:785px;width:68px;">1.4095</div>
<div class="c" style="left:853px;width:68px;">-32.39</div>
<div class="c" style="left:921px;width:83px;">3 494.40</div>
</div>
<div class="row" style="top:635px;background:#ECECEC">
<svg class="a" style="left:3px;top:3px" width="13" height="14" viewBox="0 0 13 14"><rect x="0.5" y="0.5" width="11" height="12" rx="1.5" fill="#fafafa" stroke="#707070"/><path d="M1 13.5 h11 M12.5 2 v11" stroke="#c0c0c0" fill="none"/><path d="M6 3 l-3.500 4 h2 v3 h3 v-3 h2z" fill="#1fb81f" stroke="#0a7a0a" stroke-width=".7"/></svg>
<div class="c" style="left:0;width:88px;text-align:left;padding-left:24.4px;letter-spacing:-0.15px">74757318</div>
<div class="c" style="left:88px;width:151px;letter-spacing:0.17px;">2011.06.16 20:20</div>
<div class="c" style="left:239px;width:68px;">balance</div>
<div class="c" style="left:307px;width:614px;">Deposit from Z493808667422</div>
<div class="c" style="left:921px;width:83px;">5 400.00</div>
</div>
<div class="row" style="top:655px;background:#fff">
<svg class="a" style="left:3px;top:2px" width="15" height="15" viewBox="0 0 15 15"><path d="M0.5 0.5 h7 l3 3 v9 h-10z" fill="#fff" stroke="#606060"/><path d="M7.5 0.5 v3 h3" fill="none" stroke="#606060"/><path d="M1 13.5 h10 M11.500 5 v8" stroke="#c0c0c0" fill="none"/><circle cx="10.500" cy="10.500" r="3" fill="#ff0000" stroke="#506020" stroke-width=".8"/></svg>
<div class="c" style="left:0;width:88px;text-align:left;padding-left:24.4px;letter-spacing:-0.15px">74759930</div>
<div class="c" style="left:88px;width:151px;letter-spacing:0.17px;">2011.06.16 21:00</div>
<div class="c" style="left:239px;width:68px;">sell</div>
<div class="c" style="left:307px;width:55px;">2.60</div>
<div class="c" style="left:362px;width:68px;">eurusd</div>
<div class="c" style="left:430px;width:68px;">1.4137</div>
<div class="c" style="left:498px;width:68px;background:#FFA0A0;box-shadow:inset 0 -1px 0 #fff, inset -1px 0 0 #fff, inset 1px 0 0 #fff;">1.4205</div>
<div class="c" style="left:566px;width:68px;">1.4007</div>
<div class="c" style="left:634px;width:151px;letter-spacing:0.17px;">2011.06.16 22:38</div>
<div class="c" style="left:785px;width:68px;">1.4205</div>
<div class="c" style="left:853px;width:68px;">0.00</div>
<div class="c" style="left:921px;width:83px;">-1 768.00</div>
</div>
<div class="a" style="left:20px;top:675px;width:1004px;height:19px;background:#C0C0C0"></div>
<div class="a" style="left:27px;top:682px;width:7px;height:7px;border-radius:50%;background:#b0b0b0;border:1px solid #808080"></div>
<div class="a" style="left:44.3px;top:678px;letter-spacing:0.398px;font-weight:bold">Прибыль: 10 148.84&nbsp; Кредит: 0.00&nbsp; Депозит: 40 300.00&nbsp; Снятие: 0.00</div>
<div class="a" style="left:964.7px;top:678px;letter-spacing:0.670px;font-weight:bold">50 448.84</div>
<div class="a face" style="left:19px;top:695px;width:1005px;height:24px"></div>
<div class="a" style="left:20px;top:697px;width:1004px;height:1px;background:#000"></div>
<div class="a" style="left:89px;top:695px;width:96px;height:20px;background:#fff;border:1px solid #000;border-top:none"></div>
<div class="a" style="left:32px;top:701px;letter-spacing:0.007px;color:#404040">Торговля</div>
<div class="a" style="left:98.3px;top:701px;letter-spacing:-0.030px;color:#000">История Счета</div>
<div class="a" style="left:194.3px;top:701px;letter-spacing:-0.149px;color:#404040">Новости</div>
<div class="a" style="left:256.7px;top:701px;letter-spacing:-0.221px;color:#404040">Сигналы</div>
<div class="a" style="left:321px;top:701px;letter-spacing:0.019px;color:#404040">Почтовый ящик</div>
<div class="a" style="left:421.7px;top:701px;letter-spacing:-0.028px;color:#404040">Журнал</div>
<div class="a" style="left:246px;top:701px;width:1px;height:12px;background:#404040"></div>
<div class="a" style="left:311px;top:701px;width:1px;height:12px;background:#404040"></div>
<div class="a" style="left:412px;top:701px;width:1px;height:12px;background:#404040"></div>
<div class="a" style="left:472px;top:701px;width:1px;height:12px;background:#404040"></div>
<div class="a" style="left:19px;top:717px;width:1007px;height:1px;background:#fff"></div>
<div class="a" style="left:1025px;top:436px;width:1px;height:282px;background:#fff"></div>
<div class="a" style="left:4px;top:720px;width:1024px;height:1px;background:#808080"></div>
<div class="a" style="left:4px;top:721px;width:1024px;height:1px;background:#fff"></div>
<div class="a" style="left:4px;top:743px;width:1024px;height:1px;background:#fff"></div>
<div class="a" style="left:6.3px;top:727px;letter-spacing:-0.076px;">Для справки, нажмите F1</div>
<div class="a" style="left:312.7px;top:727px;letter-spacing:0.023px;">Default</div>
<div class="sep" style="left:306px;top:724px;height:16px"></div>
<div class="sep" style="left:416px;top:724px;height:16px"></div>
<div class="sep" style="left:517px;top:724px;height:16px"></div>
<div class="sep" style="left:589px;top:724px;height:16px"></div>
<div class="sep" style="left:660px;top:724px;height:16px"></div>
<div class="sep" style="left:729px;top:724px;height:16px"></div>
<div class="sep" style="left:800px;top:724px;height:16px"></div>
<div class="sep" style="left:867px;top:724px;height:16px"></div>
<svg class="a" style="left:872px;top:727px" width="24" height="12" viewBox="0 0 24 12"><rect x="0.0" y="0" width="1.5" height="10" fill="#5a7a10"/><rect x="0.0" y="10" width="1.5" height="2" fill="#0a3a6a"/><rect x="2.4" y="0" width="1.5" height="9" fill="#5a7a10"/><rect x="2.4" y="9" width="1.5" height="3" fill="#0a3a6a"/><rect x="4.7" y="0" width="1.5" height="8" fill="#5a7a10"/><rect x="4.7" y="8" width="1.5" height="4" fill="#0a3a6a"/><rect x="7.1" y="0" width="1.5" height="7" fill="#5a7a10"/><rect x="7.1" y="7" width="1.5" height="5" fill="#0a3a6a"/><rect x="9.4" y="0" width="1.5" height="6" fill="#5a7a10"/><rect x="9.4" y="6" width="1.5" height="6" fill="#0a3a6a"/><rect x="11.8" y="0" width="1.5" height="5" fill="#5a7a10"/><rect x="11.8" y="5" width="1.5" height="7" fill="#0a3a6a"/><rect x="14.1" y="0" width="1.5" height="4" fill="#5a7a10"/><rect x="14.1" y="4" width="1.5" height="8" fill="#0a3a6a"/><rect x="16.4" y="0" width="1.5" height="3" fill="#5a7a10"/><rect x="16.4" y="3" width="1.5" height="9" fill="#0a3a6a"/><rect x="18.8" y="0" width="1.5" height="2" fill="#5a7a10"/><rect x="18.8" y="2" width="1.5" height="10" fill="#0a3a6a"/><rect x="21.2" y="0" width="1.5" height="1" fill="#5a7a10"/><rect x="21.2" y="1" width="1.5" height="11" fill="#0a3a6a"/></svg>
<div class="a" style="left:927.3px;top:727px;letter-spacing:-0.182px;">43/1 kb</div>
<svg class="a" style="left:1012px;top:726px" width="16" height="16" viewBox="0 0 16 16"><path d="M1 16 L16 1 M5 16 L16 5 M9 16 L16 9 M13 16 L16 13" stroke="#808080" stroke-width="1.500" fill="none"/><path d="M0 16 L16 0 M4 16 L16 4 M8 16 L16 8 M12 16 L16 12" stroke="#fff" stroke-width="1" fill="none"/></svg>
</body></html>
